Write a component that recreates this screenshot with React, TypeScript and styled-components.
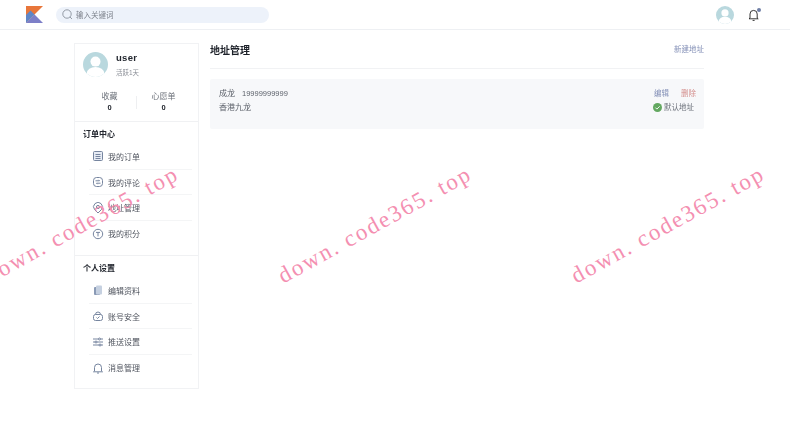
import React from "react";
import styled, { createGlobalStyle } from "styled-components";

const Global = createGlobalStyle`
  html, body { margin: 0; padding: 0; background: #fff; }
  body { font-family: "Liberation Sans", "Noto Sans CJK SC", sans-serif; color: #333; overflow: hidden; }
`;
const Page = styled.div`position: relative; width: 790px; height: 448px; overflow: hidden; background: #fff;`;
const Shell = styled.div`filter: blur(0.35px);`;
const Header = styled.header`height: 29px; border-bottom: 1px solid #eef0f3; display: flex; align-items: center; padding: 0 29px 0 26px;`;
const Logo = styled.svg`width: 17px; height: 17px; flex: none; margin-right: 13px;`;
const Search = styled.div`width: 213px; height: 16px; border-radius: 8px; background: #edf2fa; display: flex; align-items: center; gap: 3px; padding-left: 6px; box-sizing: border-box; font-size: 7.5px; color: #7c818b;`;
const HeaderRight = styled.div`margin-left: auto; display: flex; align-items: center; gap: 13px;`;
const BellWrap = styled.div`position: relative; width: 14px; height: 14px;`;
const Dot = styled.span`position: absolute; right: 0; top: 0; width: 4px; height: 4px; border-radius: 50%; background: #6f7fa6;`;
const Content = styled.main`display: flex; gap: 11px; padding: 13px 0 0 74px; align-items: flex-start;`;
const Sidebar = styled.aside`width: 125px; height: 346px; border: 1px solid #f1f2f4; box-sizing: border-box; flex: none; background: #fff;`;
const Profile = styled.section`height: 78px; border-bottom: 1px solid #f0f1f3; padding: 8px 8px 0; box-sizing: border-box;`;
const UserRow = styled.div`display: flex; align-items: center; gap: 8px;`;
const UserText = styled.div`display: flex; flex-direction: column; gap: 5px;`;
const UserName = styled.div`font-size: 9.5px; font-weight: 700; letter-spacing: .3px; color: #23272f; line-height: 11px;`;
const Active = styled.div`font-size: 6.5px; color: #8b8f97; line-height: 9px;`;
const Stats = styled.div`display: flex; align-items: center; margin-top: 14px;`;
const Stat = styled.div`flex: 1; text-align: center; font-size: 8px; color: #6a6f78; line-height: 11px;`;
const StatNum = styled.div`font-weight: 700; color: #23272f; font-size: 7.5px;`;
const StatDivider = styled.div`width: 1px; height: 13px; background: #eeeff1; flex: none;`;
const NavGroup = styled.section<{ $border?: boolean }>`height: ${p => (p.$border ? "134px" : "auto")}; border-bottom: ${p => (p.$border ? "1px solid #f0f1f3" : "none")}; padding: 8px 6px 0 8px; box-sizing: border-box;`;
const NavTitle = styled.div`font-size: 8px; font-weight: 700; color: #23272f; line-height: 10px; margin-bottom: 4px;`;
const NavRow = styled.div<{ $last?: boolean }>`height: 25.7px; margin-left: 6px; padding-left: 3px; display: flex; align-items: center; gap: 4px; font-size: 8px; color: #50555f; border-bottom: ${p => (p.$last ? "none" : "1px solid #f4f5f6")}; box-sizing: border-box;`;
const IconBox = styled.svg`width: 12px; height: 12px; flex: none; fill: none; stroke: #76859f; stroke-width: 1;`;
const Main = styled.div`width: 494px; margin-top: -3px;`;
const TitleRow = styled.div`display: flex; justify-content: space-between; align-items: center; height: 20px; padding-bottom: 8px; border-bottom: 1px solid #f1f2f4;`;
const Title = styled.h1`margin: 0 0 2px; font-size: 10px; font-weight: 700; color: #1c2028;`;
const NewLink = styled.div`font-size: 7.5px; color: #8692b8; margin-bottom: 3px;`;
const AddressCard = styled.div`margin-top: 10px; height: 50px; background: #f7f8fa; border-radius: 2px; display: flex; justify-content: space-between; padding: 9px 8px 0 9px; box-sizing: border-box; font-size: 8px; color: #5a5f68;`;
const Line = styled.div`line-height: 11px; margin-bottom: 3px;`;
const Phone = styled.span`margin-left: 7px; font-size: 7.5px;`;
const Right = styled.div`display: flex; flex-direction: column; width: 43px; white-space: nowrap; font-size: 7.5px;`;
const Actions = styled.div`display: flex; gap: 12px; line-height: 11px; margin-bottom: 3px; padding-left: 1px;`;
const Edit = styled.span`color: #8692b8;`;
const Del = styled.span`color: #d48f8d;`;
const Default = styled.div`display: flex; align-items: center; gap: 2px; line-height: 11px; color: #6f747d;`;
const Watermarks = styled.div`position: absolute; inset: 0; pointer-events: none;`;
const Mark = styled.div<{ $x: number }>`position: absolute; left: ${p => p.$x}px; top: 225px; width: 0; height: 0; display: flex; align-items: center; justify-content: center; transform: rotate(-29deg); font-family: "Liberation Serif", serif; font-size: 23px; letter-spacing: 2px; color: #f48fb1; white-space: nowrap;`;

const Avatar = ({ size }: { size: number }) => (
  <svg width={size} height={size} viewBox="0 0 26 26" style={{ flex: "none" }}>
    <defs><clipPath id={`c${size}`}><circle cx="13" cy="13" r="13" /></clipPath></defs>
    <circle cx="13" cy="13" r="13" fill="#b9d8de" />
    <g clipPath={`url(#c${size})`} fill="#fff">
      <circle cx="13" cy="10" r="5.2" />
      <ellipse cx="13" cy="22" rx="9" ry="6.5" />
    </g>
  </svg>
);

const icons: Record<string, React.ReactNode> = {
  order: <><rect x="1.5" y="1.5" width="9" height="9" rx="1" fill="#e6ebf4" /><path d="M3.5 4.5h5M3.5 6.5h5M3.5 8.5h5" /></>,
  comment: <><rect x="1.5" y="1.5" width="9" height="9" rx="3" /><path d="M3.5 4.8h4l-1-1M8.5 7.2h-4l1 1" /></>,
  address: <><path d="M6 11 2.6 7.6a4.4 4.4 0 1 1 6.8 0Z" /><circle cx="6" cy="5" r="1.6" /></>,
  points: <><circle cx="6" cy="6" r="4.7" /><path d="M4 4.4h4M6 4.4v4" /></>,
  profile: <><rect x="2" y="3" width="6" height="8" rx="1" fill="#8a9ab5" stroke="none" /><rect x="4" y="1.5" width="6" height="9" rx="1" fill="#c5d0e0" stroke="none" /></>,
  safe: <><rect x="1.5" y="4.5" width="9" height="6" rx="2" /><path d="M3.5 4.5a2.5 2.5 0 0 1 5 0M4.5 7.5l1 1 2-2" /></>,
  push: <><path d="M1 3h10M1 6h10M1 9h10" /><circle cx="7.5" cy="3" r="1" fill="#fff" /><circle cx="4" cy="6" r="1" fill="#fff" /><circle cx="8" cy="9" r="1" fill="#fff" /></>,
  bell: <><path d="M2.5 9V5.5a3.5 3.5 0 0 1 7 0V9l1 .8h-9Z" /><path d="M5 11h2" /></>,
};

const Item = ({ icon, label, last }: { icon: string; label: string; last?: boolean }) => (
  <NavRow $last={last}>
    <IconBox viewBox="0 0 12 12">{icons[icon]}</IconBox>
    {label}
  </NavRow>
);

export default function App() {
  return (
    <Page>
      <Global />
      <Shell>
        <Header>
          <Logo viewBox="0 0 17 17">
            <path d="M0 0H17L8.5 8.5 0 17Z" fill="#e8763a" />
            <path d="M0 9 4.5 4.5 8.5 8.5 0 17Z" fill="#5f86c6" />
            <path d="M0 17 8.5 8.5 17 17Z" fill="#7d7fc8" />
          </Logo>
          <Search>
            <svg width="11" height="11" viewBox="0 0 11 11" fill="none" stroke="#7d8590" strokeWidth=".8">
              <circle cx="5" cy="5" r="4.2" /><path d="m8 8 2 2" />
            </svg>
            输入关键词
          </Search>
          <HeaderRight>
            <Avatar size={18} />
            <BellWrap>
              <svg width="14" height="14" viewBox="0 0 14 14" fill="none" stroke="#222" strokeWidth=".9">
                <path d="M3 10V6a3.6 3.6 0 0 1 7.2 0v4l1 .8H2Z" /><path d="M5.6 12.4h2" />
              </svg>
              <Dot />
            </BellWrap>
          </HeaderRight>
        </Header>
        <Content>
          <Sidebar>
            <Profile>
              <UserRow>
                <Avatar size={25} />
                <UserText>
                  <UserName>user</UserName>
                  <Active>活跃1天</Active>
                </UserText>
              </UserRow>
              <Stats>
                <Stat>收藏<StatNum>0</StatNum></Stat>
                <StatDivider />
                <Stat>心愿单<StatNum>0</StatNum></Stat>
              </Stats>
            </Profile>
            <NavGroup $border>
              <NavTitle>订单中心</NavTitle>
              <Item icon="order" label="我的订单" />
              <Item icon="comment" label="我的评论" />
              <Item icon="address" label="地址管理" />
              <Item icon="points" label="我的积分" last />
            </NavGroup>
            <NavGroup>
              <NavTitle>个人设置</NavTitle>
              <Item icon="profile" label="编辑资料" />
              <Item icon="safe" label="账号安全" />
              <Item icon="push" label="推送设置" />
              <Item icon="bell" label="消息管理" last />
            </NavGroup>
          </Sidebar>
          <Main>
            <TitleRow>
              <Title>地址管理</Title>
              <NewLink>新建地址</NewLink>
            </TitleRow>
            <AddressCard>
              <div>
                <Line>成龙<Phone>19999999999</Phone></Line>
                <Line>香港九龙</Line>
              </div>
              <Right>
                <Actions><Edit>编辑</Edit><Del>删除</Del></Actions>
                <Default>
                  <svg width="9" height="9" viewBox="0 0 9 9"><circle cx="4.5" cy="4.5" r="4.5" fill="#63a860" /><path d="m2.4 4.6 1.5 1.5 2.8-2.8" fill="none" stroke="#fff" strokeWidth=".9" /></svg>
                  默认地址
                </Default>
              </Right>
            </AddressCard>
          </Main>
        </Content>
      </Shell>
      <Watermarks>
        <Mark $x={82}>down. code365. top</Mark>
        <Mark $x={375}>down. code365. top</Mark>
        <Mark $x={668}>down. code365. top</Mark>
      </Watermarks>
    </Page>
  );
}
